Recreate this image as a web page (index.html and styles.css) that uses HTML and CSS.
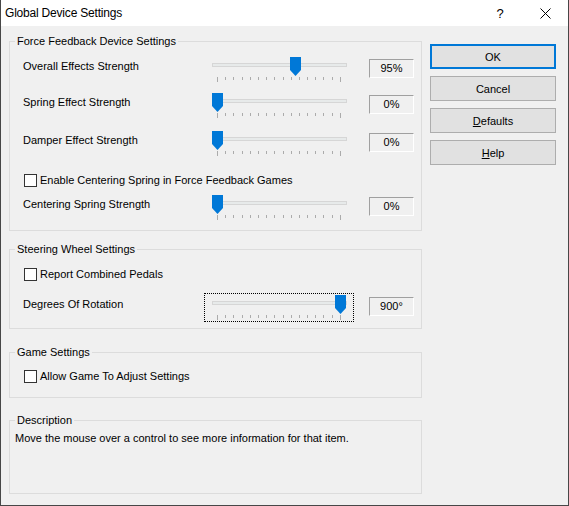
FILE: index.html
```html
<!DOCTYPE html>
<html>
<head>
<meta charset="utf-8">
<title>Global Device Settings</title>
<link rel="stylesheet" href="styles.css">
</head>
<body>
<div class="window">
  <div class="titlebar">
    <span class="title">Global Device Settings</span>
    <div class="caption">
      <span class="cap-btn cap-help">?</span>
      <span class="cap-btn cap-close"><svg width="11" height="11" viewBox="0 0 11 11"><path d="M0.5 0.5L10.5 10.5M10.5 0.5L0.5 10.5" stroke="#000" stroke-width="1" fill="none"/></svg></span>
    </div>
  </div>
  <div class="client">
    <div class="groups">
      <fieldset class="group g-ff">
        <legend>Force Feedback Device Settings</legend>
        <div class="row r1">
          <span class="label">Overall Effects Strength</span>
          <div class="slider">
            <div class="track"></div>
            <div class="ticks"><i></i><i></i><i></i><i></i><i></i><i></i><i></i><i></i><i></i><i></i><i></i><i></i><i></i><i></i><i></i><i></i></div>
            <svg class="thumb" style="left:86px" width="11" height="19" viewBox="0 0 11 19"><path d="M0 0H11V13L5.5 19L0 13Z" fill="#0078d7"/></svg>
          </div>
          <span class="value">95%</span>
        </div>
        <div class="row r2">
          <span class="label">Spring Effect Strength</span>
          <div class="slider">
            <div class="track"></div>
            <div class="ticks"><i></i><i></i><i></i><i></i><i></i><i></i><i></i><i></i><i></i><i></i><i></i><i></i><i></i><i></i><i></i><i></i></div>
            <svg class="thumb" style="left:8px" width="11" height="19" viewBox="0 0 11 19"><path d="M0 0H11V13L5.5 19L0 13Z" fill="#0078d7"/></svg>
          </div>
          <span class="value">0%</span>
        </div>
        <div class="row r3">
          <span class="label">Damper Effect Strength</span>
          <div class="slider">
            <div class="track"></div>
            <div class="ticks"><i></i><i></i><i></i><i></i><i></i><i></i><i></i><i></i><i></i><i></i><i></i><i></i><i></i><i></i><i></i><i></i></div>
            <svg class="thumb" style="left:8px" width="11" height="19" viewBox="0 0 11 19"><path d="M0 0H11V13L5.5 19L0 13Z" fill="#0078d7"/></svg>
          </div>
          <span class="value">0%</span>
        </div>
        <label class="check c1"><span class="box"></span>Enable Centering Spring in Force Feedback Games</label>
        <div class="row r4">
          <span class="label">Centering Spring Strength</span>
          <div class="slider">
            <div class="track"></div>
            <div class="ticks"><i></i><i></i><i></i><i></i><i></i><i></i><i></i><i></i><i></i><i></i><i></i><i></i><i></i><i></i><i></i><i></i></div>
            <svg class="thumb" style="left:8px" width="11" height="19" viewBox="0 0 11 19"><path d="M0 0H11V13L5.5 19L0 13Z" fill="#0078d7"/></svg>
          </div>
          <span class="value">0%</span>
        </div>
      </fieldset>

      <fieldset class="group g-sw">
        <legend>Steering Wheel Settings</legend>
        <label class="check c2"><span class="box"></span>Report Combined Pedals</label>
        <div class="row r5">
          <span class="label">Degrees Of Rotation</span>
          <div class="slider focused">
            <div class="track"></div>
            <div class="ticks"><i></i><i></i><i></i><i></i><i></i><i></i><i></i><i></i><i></i><i></i><i></i><i></i><i></i><i></i><i></i><i></i></div>
            <svg class="thumb" style="left:131px" width="11" height="19" viewBox="0 0 11 19"><path d="M0 0H11V13L5.5 19L0 13Z" fill="#0078d7"/></svg>
          </div>
          <span class="value">900°</span>
        </div>
      </fieldset>

      <fieldset class="group g-gs">
        <legend>Game Settings</legend>
        <label class="check c3"><span class="box"></span>Allow Game To Adjust Settings</label>
      </fieldset>

      <fieldset class="group g-desc">
        <legend>Description</legend>
        <p class="desc">Move the mouse over a control to see more information for that item.</p>
      </fieldset>
    </div>

    <div class="buttons">
      <button class="btn default">OK</button>
      <button class="btn">Cancel</button>
      <button class="btn"><u>D</u>efaults</button>
      <button class="btn"><u>H</u>elp</button>
    </div>
  </div>
</div>
</body>
</html>
```

FILE: styles.css
```css
html, body {
  margin: 0;
  padding: 0;
  background: #f0f0f0;
}

body {
  font-family: "Liberation Sans", Arial, sans-serif;
  font-size: 11px;
  color: #000;
}

.window {
  width: 569px;
  height: 506px;
  box-sizing: border-box;
  border: 1px solid #474747;
  border-top: none;
  background: #f0f0f0;
  overflow: hidden;
}

.titlebar {
  height: 26px;
  background: #fff;
  display: flex;
  align-items: center;
  justify-content: space-between;
  padding-left: 4px;
}

.title {
  font-size: 12px;
  line-height: 16px;
  letter-spacing: -0.2px;
}

.caption {
  display: flex;
  height: 26px;
}

.cap-btn {
  width: 46px;
  height: 26px;
  display: flex;
  align-items: center;
  justify-content: center;
}

.cap-help {
  font-size: 13px;
  padding-left: 2px;
  box-sizing: border-box;
}

.client {
  display: flex;
  gap: 8px;
  padding: 9px 0 0 8px;
}

.groups {
  width: 413px;
  display: flex;
  flex-direction: column;
}

.group {
  margin: 0;
  padding: 0;
  border: 1px solid #dcdcdc;
  min-inline-size: 0;
  display: flex;
  flex-direction: column;
}

.group legend {
  margin-left: 5px;
  padding: 0 2px;
  line-height: 13px;
}

.g-ff { padding-bottom: 8px; }
.g-sw { margin-top: 12px; padding-bottom: 6px; }
.g-gs { margin-top: 17px; padding-bottom: 14px; }
.g-desc { margin-top: 16px; height: 80px; box-sizing: border-box; }

.row {
  display: grid;
  grid-template-columns: 181px 150px 60px;
  align-items: start;
  padding-left: 13px;
}

.r1 { margin-top: 7px; }
.r2 { margin-top: 7px; }
.r3 { margin-top: 9px; }
.r4 { margin-top: 6px; }
.r5 { margin-top: 12px; }

.label {
  margin-top: 5px;
  line-height: 13px;
  white-space: nowrap;
}

.slider {
  position: relative;
  height: 29px;
  padding-top: 8px;
  box-sizing: border-box;
}

.slider.focused {
  outline: 1px dotted #000;
  outline-offset: -1px;
}

.track {
  margin-left: 8px;
  width: 135px;
  height: 4px;
  box-sizing: border-box;
  border: 1px solid #d6d6d6;
  background: #e7eaea;
}

.ticks {
  margin: 10px 0 0 13px;
  width: 124px;
  display: flex;
  justify-content: space-between;
  align-items: flex-start;
}

.ticks i {
  width: 1px;
  height: 3px;
  background: #ababab;
}

.ticks i:first-child,
.ticks i:last-child {
  height: 5px;
}

.thumb {
  position: absolute;
  top: 2px;
  display: block;
}

.value {
  margin: 4px 0 0 15px;
  width: 45px;
  height: 19px;
  box-sizing: border-box;
  border: 1px solid;
  border-color: #a0a0a0 #fff #fff #a0a0a0;
  text-align: center;
  line-height: 17px;
}

.check {
  display: flex;
  align-items: center;
  height: 13px;
  line-height: 13px;
  padding-left: 14px;
  white-space: nowrap;
}

.check .box {
  width: 13px;
  height: 13px;
  box-sizing: border-box;
  border: 1px solid #333;
  background: #fff;
  margin-right: 3px;
  flex: none;
}

.c1 { margin-top: 16px; }
.c2 { margin-top: 12px; }
.c3 { margin-top: 11px; }

.desc {
  margin: 5px 0 0 5px;
  line-height: 13px;
}

.buttons {
  margin-top: 9px;
  display: flex;
  flex-direction: column;
  gap: 7px;
}

.btn {
  width: 126px;
  height: 25px;
  box-sizing: border-box;
  border: 1px solid #adadad;
  background: #e1e1e1;
  font-family: "Liberation Sans", Arial, sans-serif;
  font-size: 11px;
  color: #000;
  padding: 0;
  margin: 0;
}

.btn.default {
  border: 2px solid #0078d7;
}
```
